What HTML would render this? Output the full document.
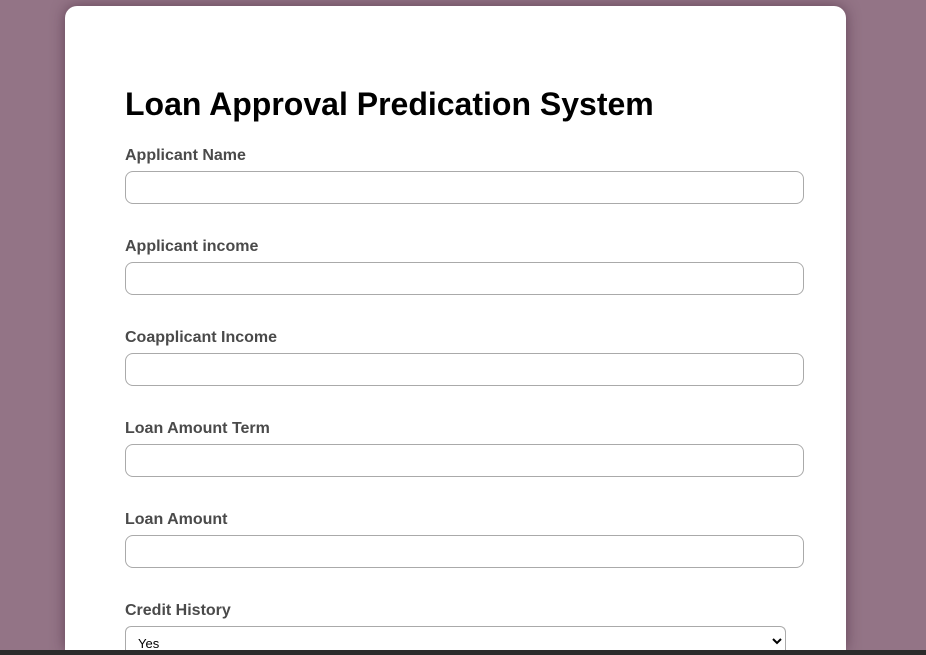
<!DOCTYPE html>
<html><head><style>
html,body{margin:0;padding:0;width:926px;height:655px;overflow:hidden;background:#937486;font-family:"Liberation Sans",Arial,sans-serif}
.card{position:absolute;left:65px;top:6px;width:781px;height:644px;background:#fff;border-radius:12px 12px 0 0;box-shadow:0 0 14px rgba(60,30,50,.55)}
h1{position:absolute;left:125px;top:86px;margin:0;font-size:32px;font-weight:bold;color:#000}
.l{position:absolute;left:125px;font-size:16px;font-weight:bold;color:#4a4a4a}
.i{position:absolute;left:125px;width:677px;height:31px;border:1px solid #aaa;border-radius:8px;background:#fff}
.s{position:absolute;left:125px;top:626px;width:659px;height:24px;border:1px solid #aaa;border-bottom:none;border-radius:6px 6px 0 0;background:#fff;font-size:13px;overflow:hidden}
.s span{position:absolute;left:12px;top:9px}
.bar{position:absolute;left:0;top:650px;width:926px;height:5px;background:#2b2b2b}
</style></head><body>
<div class="card"></div>
<h1>Loan Approval Predication System</h1>
<div class="l" style="top:147px">Applicant Name</div><div class="i" style="top:171px"></div>
<div class="l" style="top:238px">Applicant income</div><div class="i" style="top:262px"></div>
<div class="l" style="top:329px">Coapplicant Income</div><div class="i" style="top:353px"></div>
<div class="l" style="top:420px">Loan Amount Term</div><div class="i" style="top:444px"></div>
<div class="l" style="top:511px">Loan Amount</div><div class="i" style="top:535px"></div>
<div class="l" style="top:602px">Credit History</div>
<div class="s"><span>Yes</span><svg style="position:absolute;left:646px;top:11px" width="10" height="7" viewBox="0 0 10 7"><path d="M1 1l4 4 4-4" stroke="#000" stroke-width="2" fill="none"/></svg></div>
<div class="bar"></div>
</body></html>
